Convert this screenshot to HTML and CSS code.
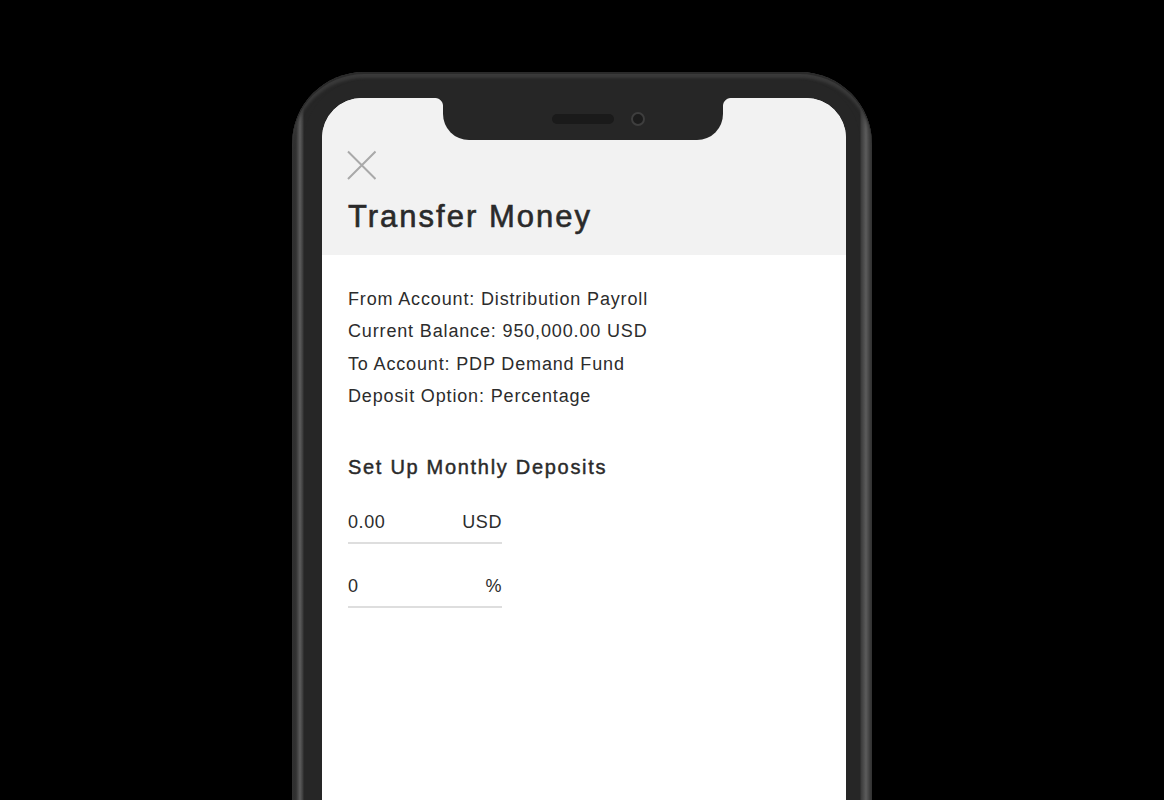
FILE: index.html
```html
<!DOCTYPE html>
<html lang="en">
<head>
<meta charset="utf-8">
<title>Transfer Money</title>
<link rel="stylesheet" href="styles.css">
</head>
<body>
<div class="stage">
  <div class="phone">
    <div class="bezel">
      <div class="screen">
        <div class="notch">
          <span class="speaker"></span>
          <span class="camera"></span>
        </div>
        <header class="header">
          <button class="close" aria-label="Close">
            <svg width="30" height="30" viewBox="0 0 30 30"><path d="M2 1.5 L29.5 29 M29.5 1.5 L2 29" stroke="#a9a9a9" stroke-width="2" fill="none"/></svg>
          </button>
          <h1 class="title">Transfer Money</h1>
        </header>
        <main class="content">
          <div class="details">
            <p>From Account: Distribution Payroll</p>
            <p>Current Balance: 950,000.00 USD</p>
            <p>To Account: PDP Demand Fund</p>
            <p>Deposit Option: Percentage</p>
          </div>
          <h2 class="section-title">Set Up Monthly Deposits</h2>
          <div class="field"><span>0.00</span><span>USD</span></div>
          <div class="field"><span>0</span><span>%</span></div>
        </main>
      </div>
    </div>
  </div>
</div>
</body>
</html>
```

FILE: styles.css
```css
html, body {
  margin: 0;
  padding: 0;
  background: #000;
  height: 800px;
  overflow: hidden;
  font-family: "Liberation Sans", Arial, sans-serif;
}

.stage {
  display: flex;
  justify-content: center;
  padding-top: 72px;
}

.phone {
  width: 580px;
  height: 760px;
  box-sizing: border-box;
  padding: 8px 12px 0 12px;
  border-radius: 72px 72px 0 0;
  background: linear-gradient(to right, #2c2c2c 0, #323232 4px, #5c5c5c 8px, #3a3a3a 11px, #262626 12px, #262626 calc(100% - 12px), #3a3a3a calc(100% - 11px), #5c5c5c calc(100% - 6px), #2c2c2c 100%);
  box-shadow: inset 0 2px 0 #2a2a2a, inset 0 6px 3px #3a3a3a;
}

.bezel {
  height: 100%;
  box-sizing: border-box;
  padding: 18px 14px 0 18px;
  background: #262626;
  border-radius: 62px 62px 0 0;
}

.screen {
  position: relative;
  height: 100%;
  background: #fff;
  border-radius: 40px 40px 0 0;
  overflow: hidden;
}

.notch {
  position: absolute;
  top: 0;
  left: 121px;
  width: 280px;
  height: 42px;
  background: #262626;
  border-radius: 0 0 26px 26px;
  display: flex;
  justify-content: center;
  align-items: center;
  gap: 17px;
  padding-left: 31px;
  box-sizing: border-box;
}

.notch::before,
.notch::after {
  content: "";
  position: absolute;
  top: 0;
  width: 8px;
  height: 8px;
}

.notch::before {
  left: -8px;
  background: radial-gradient(circle at 0 100%, transparent 7.5px, #262626 8.5px);
}

.notch::after {
  right: -8px;
  background: radial-gradient(circle at 100% 100%, transparent 7.5px, #262626 8.5px);
}

.speaker {
  width: 62px;
  height: 10px;
  border-radius: 5px;
  background: #1a1a1a;
}

.camera {
  width: 10px;
  height: 10px;
  border-radius: 50%;
  background: #1c1c1c;
  border: 2px solid #3e3e3e;
}

.header {
  background: #f2f2f2;
  height: 157px;
  box-sizing: border-box;
  padding: 52px 25px 0 24px;
}

.close {
  display: block;
  width: 30px;
  height: 30px;
  padding: 0;
  border: 0;
  background: none;
}

.close svg {
  display: block;
}

.title {
  margin: 17px 0 0 2px;
  font-size: 31px;
  font-weight: 400;
  line-height: 40px;
  color: #2a2a2a;
  letter-spacing: 2px;
  -webkit-text-stroke: 0.6px #2a2a2a;
}

.content {
  padding: 28px 26px 0 26px;
  color: #2c2c2c;
}

.details p {
  margin: 0;
  font-size: 18px;
  line-height: 32.4px;
  letter-spacing: 0.85px;
}

.section-title {
  margin: 39px 0 0;
  font-size: 20px;
  font-weight: 400;
  line-height: 30px;
  color: #2a2a2a;
  letter-spacing: 1.7px;
  -webkit-text-stroke: 0.45px #2a2a2a;
}

.field {
  width: 154px;
  display: flex;
  justify-content: space-between;
  font-size: 18px;
  line-height: 24px;
  letter-spacing: 0.6px;
  padding-top: 28px;
  padding-bottom: 8px;
  border-bottom: 2px solid #dedede;
}

.field + .field {
  padding-top: 30px;
  padding-bottom: 8px;
}
```
